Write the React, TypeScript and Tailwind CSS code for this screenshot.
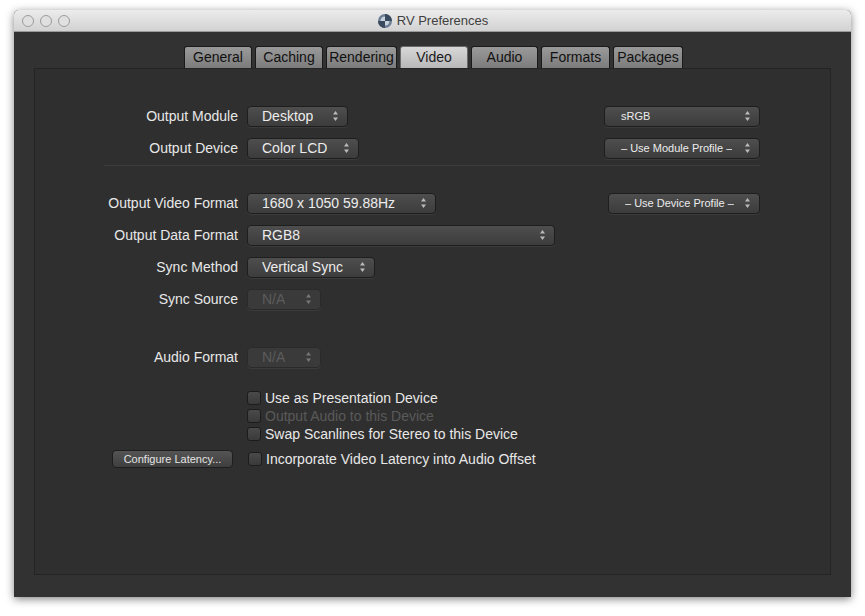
import React from 'react'

const font = { fontFamily: '"Liberation Sans", Arial, sans-serif' }

function Arrows() {
  return (
    <svg width="7" height="12" viewBox="0 0 7 12" className="shrink-0">
      <path d="M3.5 1 L6 4.5 H1 Z" fill="currentColor" />
      <path d="M3.5 11 L6 7.5 H1 Z" fill="currentColor" />
    </svg>
  )
}

function Popup({ label, w, disabled, small }: { label: string; w: number; disabled?: boolean; small?: boolean }) {
  return (
    <div
      style={{ width: w }}
      className={
        'h-[21px] flex items-center justify-between rounded-[4px] border shadow-[0_1px_0_rgba(255,255,255,0.06)] ' +
        (small ? 'pl-4 pr-2 text-[11px] ' : 'pl-[14px] pr-2 text-[14px] ') +
        (disabled
          ? 'border-[#2a2a2a] bg-[#3a3a3a] text-[#5c5c5c]'
          : 'border-[#1e1e1e] bg-gradient-to-b from-[#4e4e4e] to-[#3c3c3c] text-[#ececec]')
      }
    >
      <span className="truncate">{label}</span>
      <span className={disabled ? 'text-[#777]' : 'text-[#bbb]'}><Arrows /></span>
    </div>
  )
}

function Row({ label, children, right }: { label: string; children: React.ReactNode; right?: React.ReactNode }) {
  return (
    <div className="h-[32px] flex items-center">
      <div className="w-[212px] shrink-0 text-right pr-[9px] text-[14px] text-[#e8e8e8]">{label}</div>
      {children}
      <div className="flex-1" />
      {right}
    </div>
  )
}

function Check({ label, disabled }: { label: string; disabled?: boolean }) {
  return (
    <div className="h-[18px] flex items-center gap-[4px]">
      <div className="w-[14px] h-[14px] rounded-[3px] border border-[#1c1c1c] bg-gradient-to-b from-[#4a4a4a] to-[#3a3a3a]" />
      <span className={'text-[14px] ' + (disabled ? 'text-[#5a5a5a]' : 'text-[#e8e8e8]')}>{label}</span>
    </div>
  )
}

const tabs = ['General', 'Caching', 'Rendering', 'Video', 'Audio', 'Formats', 'Packages']
const tabW = [68, 68, 71, 68, 67, 69, 70]

export default function App() {
  return (
    <div style={font} className="w-[865px] h-[616px] bg-white pt-[10px] pl-[14px]">
      <div className="w-[837px] h-[587px] rounded-t-[5px] overflow-hidden shadow-[0_2px_8px_rgba(0,0,0,0.5)] flex flex-col bg-[#323232]">
        <div className="h-[22px] shrink-0 bg-gradient-to-b from-[#ececec] to-[#d2d2d2] border-b border-[#9a9a9a] flex items-center relative">
          <div className="flex gap-[6px] pl-[8px]">
            {[0, 1, 2].map(i => (
              <div key={i} className="w-[12px] h-[12px] rounded-full border border-[#9c9c9c] bg-[#e0e0e0]" />
            ))}
          </div>
          <div className="absolute inset-0 flex items-center justify-center gap-[4px] text-[13px] text-[#404040]">
            <svg width="16" height="16" viewBox="0 0 16 16">
              <circle cx="8" cy="8" r="7" fill="#6d7f94" />
              <circle cx="8" cy="8" r="4.5" fill="#c9d3de" />
              <path d="M8 1 A7 7 0 0 1 15 8 H8 Z" fill="#3a4a5e" />
              <path d="M8 15 A7 7 0 0 1 1 8 H8 Z" fill="#3a4a5e" />
            </svg>
            RV Preferences
          </div>
        </div>
        <div className="flex pt-[14px] pl-[167px]">
          <div className="flex h-[22px]">
            {tabs.map((t, i) => (
              <div
                key={t}
                style={{ width: tabW[i] }}
                className={
                  'flex items-center justify-center text-[14px] border border-b-0 rounded-t-[3px] ml-[3px] ' +
                  (t === 'Video'
                    ? 'bg-gradient-to-b from-[#d8d8d8] to-[#b8b8b8] border-[#6a6a6a] text-[#1a1a1a]'
                    : 'bg-gradient-to-b from-[#9a9a9a] to-[#7c7c7c] border-[#1a1a1a] text-[#111]')
                }
              >
                {t}
              </div>
            ))}
          </div>
        </div>
        <div className="mx-[20px] h-[507px] border border-[#242424] bg-[#2f2f2f] pt-[31px] pr-[70px]">
          <Row label="Output Module" right={<Popup label="sRGB" w={156} small />}>
            <Popup label="Desktop" w={101} />
          </Row>
          <Row label="Output Device" right={<Popup label="– Use Module Profile –" w={156} small />}>
            <Popup label="Color LCD" w={112} />
          </Row>
          <div className="ml-[69px] mt-[1px] mb-[21px] h-px bg-[#1c1c1c] border-b border-[#3c3c3c]" />
          <Row label="Output Video Format" right={<Popup label="– Use Device Profile –" w={152} small />}>
            <Popup label="1680 x 1050 59.88Hz" w={189} />
          </Row>
          <Row label="Output Data Format">
            <Popup label="RGB8" w={308} />
          </Row>
          <Row label="Sync Method">
            <Popup label="Vertical Sync" w={128} />
          </Row>
          <Row label="Sync Source">
            <Popup label="N/A" w={74} disabled />
          </Row>
          <div className="h-[26px]" />
          <Row label="Audio Format">
            <Popup label="N/A" w={74} disabled />
          </Row>
          <div className="pl-[212px] pt-[16px]">
            <Check label="Use as Presentation Device" />
            <Check label="Output Audio to this Device" disabled />
            <Check label="Swap Scanlines for Stereo to this Device" />
          </div>
          <div className="flex items-center mt-[7px] pl-[77px]">
            <div className="w-[121px] h-[18px] rounded-[4px] border border-[#1e1e1e] bg-gradient-to-b from-[#555] to-[#3e3e3e] text-[11px] text-[#e4e4e4] flex items-center justify-center">
              Configure Latency...
            </div>
            <div className="ml-[15px]">
              <Check label="Incorporate Video Latency into Audio Offset" />
            </div>
          </div>
        </div>
      </div>
    </div>
  )
}
